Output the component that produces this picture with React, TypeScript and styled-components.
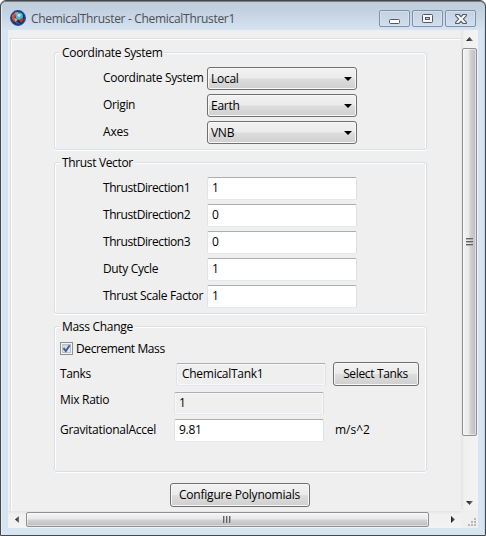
import React from "react";
import styled, { createGlobalStyle } from "styled-components";

const Global = createGlobalStyle`
  html, body { margin: 0; padding: 0; overflow: hidden; background: #fff; }
  *, *::before, *::after { box-sizing: border-box; }
  body { font: 12px/16px "Open Sans", "Noto Sans", sans-serif; color: #000; letter-spacing: -0.28px; }
`;

const Window = styled.div`
  width: 486px;
  height: 536px;
  padding: 0 7px 7px;
  border: 1px solid #47464a;
  border-radius: 6px 6px 0 0;
  background: linear-gradient(#c0cddb 0, #c3d1e0 10px, #d7e4f2 30px, #d7e4f2 100%);
  box-shadow: inset 0 1px 0 #77808a, inset 1px 0 0 #e6eef6, inset -1px 0 0 #c4d6e6;
`;

const TitleBar = styled.header`
  display: flex;
  height: 29px;
  padding: 9px 2px 0 2px;
`;

const Title = styled.h1`
  flex: 1;
  margin: 1px 0 0 5px;
  font-size: 12px;
  font-weight: 400;
  line-height: 16px;
  letter-spacing: -0.31px;
  color: #4b4f57;
  white-space: nowrap;
`;

const Caption = styled.button`
  display: flex;
  align-items: center;
  justify-content: center;
  width: 31px;
  height: 17px;
  margin-left: 2px;
  padding: 0;
  border: 1px solid #7f90ad;
  border-radius: 2px;
  background: linear-gradient(#c3d1e0, #d0deed);
  box-shadow: inset 0 0 0 1px #d5e1ee;
`;

const Client = styled.main`
  display: grid;
  grid-template-columns: 453px 17px;
  grid-template-rows: 481px 17px;
  width: 470px;
  height: 498px;
  background: #efefef;
`;

const Pane = styled.div`
  display: flex;
  flex-direction: column;
  margin: 8px 0 0 2px;
  padding: 13px 0 0 43px;
  border: solid #d5dfe5;
  border-width: 1px 0 0 1px;
  box-shadow: inset 1px 1px 0 #fff;
`;

const Group = styled.fieldset<{ $h: number; $gap: number }>`
  display: flex;
  flex: none;
  flex-direction: column;
  width: 373px;
  min-width: 0;
  height: ${p => p.$h}px;
  margin: 0 0 ${p => p.$gap}px;
  padding: 0;
  border: 1px solid #d5dfe5;
  border-radius: 3px;
  box-shadow: inset 1px 1px 0 #fff, inset -1px 0 0 #fff, 0 1px 0 #fff;
`;

const Legend = styled.div<{ $ls: number }>`
  align-self: flex-start;
  flex: none;
  height: 16px;
  margin: -8px 0 0 5px;
  padding: 0 2px;
  background: #efefef;
  letter-spacing: ${p => p.$ls}px;
  white-space: nowrap;
`;

const Row = styled.div<{ $indent: number; $h: number; $gap: number }>`
  display: flex;
  flex: none;
  align-items: flex-start;
  height: ${p => p.$h}px;
  margin-top: ${p => p.$gap}px;
  padding-left: ${p => p.$indent}px;
`;

const Label = styled.label<{ $w: number; $ls: number; $top?: number }>`
  flex: none;
  width: ${p => p.$w}px;
  padding-top: ${p => p.$top ?? 3}px;
  letter-spacing: ${p => p.$ls}px;
  white-space: nowrap;
`;

const Select = styled.div`
  display: flex;
  justify-content: space-between;
  width: 150px;
  height: 23px;
  padding: 3px 4px 0 3px;
  border: 1px solid #707070;
  border-radius: 3px;
  background: linear-gradient(#f2f2f2 0, #ebebeb 48%, #dddddd 52%, #cfcfcf 100%);
  box-shadow: inset 0 0 0 1px #f8f8f8;
  svg { margin-top: 6px; }
`;

const Field = styled.div<{ $disabled?: boolean; $pad?: number }>`
  flex: none;
  width: 150px;
  height: 23px;
  padding: 2px 0 0 ${p => p.$pad ?? 4}px;
  border: 1px solid;
  border-color: #abadb3 #dbdfe6 #e3e9ef #e2e3ea;
  border-radius: 2px;
  background: ${p => (p.$disabled ? "#efefef" : "#fff")};
  box-shadow: inset 0 0 0 1px ${p => (p.$disabled ? "#f8f8f8" : "#fff")};
  white-space: nowrap;
`;

const TankField = styled(Field)`
  margin-top: 1px;
`;

const Button = styled.button<{ $w: number; $ls: number }>`
  flex: none;
  width: ${p => p.$w}px;
  height: 24px;
  padding: 0 1px 1px 0;
  border: 1px solid #707070;
  border-radius: 3px;
  background: linear-gradient(#f2f2f2 0, #ebebeb 48%, #dddddd 52%, #cfcfcf 100%);
  box-shadow: inset 0 0 0 1px #f8f8f8;
  color: #000;
  font: inherit;
  letter-spacing: ${p => p.$ls}px;
  white-space: nowrap;
`;

const Check = styled.span`
  display: block;
  width: 13px;
  height: 13px;
  margin-right: 3px;
  border: 1px solid #8e8f8f;
  background: linear-gradient(135deg, #c5ccd5, #f4f5f6);
  box-shadow: inset 0 0 0 1px #f4f4f4, inset 0 0 0 2px #b9c0ca;
  svg { display: block; }
`;

const CheckLabel = styled(Label)`
  margin-top: -1px;
`;

const VBar = styled.div`
  display: flex;
  flex-direction: column;
  align-items: center;
  width: 17px;
  height: 480px;
  padding-right: 1px;
  background: linear-gradient(90deg, #e4e4e4, #f0f0f0 20%, #f3f3f3);
`;

const HBar = styled.div`
  display: flex;
  align-items: center;
  height: 17px;
  background: linear-gradient(#e4e4e4, #f0f0f0 20%, #f3f3f3);
`;

const ArrowCell = styled.div<{ $w: number; $h: number }>`
  display: flex;
  flex: none;
  align-items: center;
  justify-content: center;
  width: ${p => p.$w}px;
  height: ${p => p.$h}px;
`;

const Thumb = styled.div<{ $vertical?: boolean }>`
  display: flex;
  flex: none;
  align-items: center;
  justify-content: center;
  width: ${p => (p.$vertical ? 15 : 403)}px;
  height: ${p => (p.$vertical ? 388 : 15)}px;
  border: 1px solid #8f8f8f;
  border-radius: 2px;
  background: linear-gradient(${p => (p.$vertical ? "90deg" : "180deg")}, #f4f4f4 0, #e9e9eb 45%, #d3d3d6 55%, #bcbcc0 100%);
  box-shadow: inset 0 0 0 1px rgba(255, 255, 255, 0.5);
`;

const Spacer = styled.div`
  flex: 1;
`;

const Gap = styled.div<{ $w: number }>`
  flex: none;
  width: ${p => p.$w}px;
`;

const Grip = styled.div`
  display: flex;
  align-items: flex-end;
  justify-content: flex-end;
  padding: 0 2px 2px 0;
`;

const Logo = () => (
  <svg width="16" height="16" viewBox="0 0 16 16">
    <circle cx="8" cy="8" r="7.2" fill="#1b2747" stroke="#1d4a9c" strokeWidth="1.5" />
    <path d="M2 5 5.5 2l1.5 2-2.5 3 1.5 4-2 1L2 9z" fill="#d9512c" />
    <path d="M4.5 3l4-1.2L7 4.5z" fill="#f0b49a" />
    <circle cx="9.3" cy="6.3" r="3.7" fill="#45b8cf" />
    <path d="M7 5 9 3.5l2 1.5-2 2.5z" fill="#b2e9ea" />
    <path d="M9 10l4-2.5.7 2-2.7 3.5z" fill="#c8322d" />
    <path d="M3.5 11l4 .5 2.5 2.3-3 .5z" fill="#3553ab" />
    <path d="M4.5 7.5l3 2.5-2 2z" fill="#e1b4a0" />
  </svg>
);

const Down = () => (
  <svg width="8" height="4" viewBox="0 0 8 4"><path d="M0 0h8L4 4z" fill="#000" /></svg>
);

const Arrow = ({ d, w, h, id }: { d: string; w: number; h: number; id: string }) => (
  <svg width={w} height={h} viewBox={`0 0 ${w} ${h}`}>
    <defs>
      <linearGradient id={id}><stop stopColor="#151515" /><stop offset="1" stopColor="#777" /></linearGradient>
    </defs>
    <path d={d} fill={`url(#${id})`} />
  </svg>
);

const Ridges = ({ vertical }: { vertical?: boolean }) => (
  <svg width="9" height="9" viewBox="0 0 9 9">
    <g transform={vertical ? "matrix(0 1 1 0 0 0)" : undefined}>
      {[1, 4, 7].map(x => (
        <g key={x}>
          <path d={`M${x - 0.5} 1v7`} stroke="#626367" />
          <path d={`M${x + 0.5} 1v7`} stroke="#b0b0b3" />
        </g>
      ))}
    </g>
  </svg>
);

const coordinates: [string, string, number][] = [
  ["Coordinate System", "Local", -0.32],
  ["Origin", "Earth", -0.35],
  ["Axes", "VNB", -0.2],
];

const thrust: [string, string, number][] = [
  ["ThrustDirection1", "1", -0.43],
  ["ThrustDirection2", "0", -0.43],
  ["ThrustDirection3", "0", -0.43],
  ["Duty Cycle", "1", -0.35],
  ["Thrust Scale Factor", "1", -0.33],
];

export default function App() {
  return (
    <>
      <Global />
      <Window>
        <TitleBar>
          <Logo />
          <Title>ChemicalThruster - ChemicalThruster1</Title>
          <Caption aria-label="Minimize">
            <svg width="11" height="11"><rect x=".5" y="6.5" width="10" height="4" rx="1" fill="#fff" stroke="#535666" /></svg>
          </Caption>
          <Caption aria-label="Maximize">
            <svg width="11" height="9"><rect x=".5" y=".5" width="10" height="8" rx="1" fill="#f8f8f8" stroke="#535666" /><rect x="3.5" y="3.5" width="4" height="2" fill="#b6c8dc" stroke="#535666" /></svg>
          </Caption>
          <Caption aria-label="Close">
            <svg width="12" height="10" viewBox="0 0 12 10"><path d="M.7.5h3.2L6 2.6 8.1.5h3.2v1.3L8.4 5l2.9 3.2v1.3H8.1L6 7.4 3.9 9.5H.7V8.2L3.6 5 .7 1.8z" fill="#f8f8f8" stroke="#535666" strokeWidth="1.1" /></svg>
          </Caption>
        </TitleBar>
        <Client>
          <Pane>
            <Group $h={98} $gap={12}>
              <Legend $ls={-0.32}>Coordinate System</Legend>
              {coordinates.map(([name, value, spacing], i) => (
                <Row key={name} $indent={48} $h={23} $gap={i ? 4 : 6}>
                  <Label $w={104} $ls={spacing}>{name}</Label>
                  <Select>{value}<Down /></Select>
                </Row>
              ))}
            </Group>
            <Group $h={152} $gap={12}>
              <Legend $ls={-0.35}>Thrust Vector</Legend>
              {thrust.map(([name, value, spacing], i) => (
                <Row key={name} $indent={48} $h={23} $gap={i ? 4 : 6}>
                  <Label $w={104} $ls={spacing}>{name}</Label>
                  <Field>{value}</Field>
                </Row>
              ))}
            </Group>
            <Group $h={146} $gap={11}>
              <Legend $ls={-0.3}>Mass Change</Legend>
              <Row $indent={5} $h={16} $gap={7}>
                <Check><svg width="11" height="11"><path d="M2.5 5.2 4.8 8 8.7 2.2" fill="none" stroke="#4a5f97" strokeWidth="2" /></svg></Check>
                <CheckLabel $w={90} $ls={-0.4} $top={0}>Decrement Mass</CheckLabel>
              </Row>
              <Row $indent={5} $h={24} $gap={4}>
                <Label $w={116} $ls={-0.35} $top={4}>Tanks</Label>
                <TankField $disabled $pad={5}>ChemicalTank1</TankField>
                <Spacer />
                <Button $w={86} $ls={-0.35}>Select Tanks</Button>
                <Gap $w={7} />
              </Row>
              <Row $indent={5} $h={23} $gap={6}>
                <Label $w={114} $ls={-0.3} $top={0}>Mix Ratio</Label>
                <Field $disabled>1</Field>
              </Row>
              <Row $indent={5} $h={23} $gap={4}>
                <Label $w={114} $ls={-0.26}>GravitationalAccel</Label>
                <Field>9.81</Field>
                <Gap $w={11} />
                <Label $w={40} $ls={0}>m/s^2</Label>
              </Row>
            </Group>
            <Row $indent={116} $h={24} $gap={0}>
              <Button $w={140} $ls={-0.2}>Configure Polynomials</Button>
            </Row>
          </Pane>
          <VBar>
            <ArrowCell $w={16} $h={18}><Arrow id="up" w={7} h={4} d="M0 4h7L3.5 0z" /></ArrowCell>
            <Thumb $vertical><Ridges vertical /></Thumb>
            <Spacer />
            <ArrowCell $w={16} $h={15}><Arrow id="down" w={7} h={4} d="M0 0h7L3.5 4z" /></ArrowCell>
          </VBar>
          <HBar>
            <ArrowCell $w={18} $h={16}><Arrow id="left" w={4} h={7} d="M4 0v7L0 3.5z" /></ArrowCell>
            <Thumb><Ridges /></Thumb>
            <Spacer />
            <ArrowCell $w={16} $h={16}><Arrow id="right" w={4} h={7} d="M0 0v7l4-3.5z" /></ArrowCell>
          </HBar>
          <Grip>
            <svg width="8" height="8" fill="#b8b8b8"><path d="M6 0h2v2H6zM3 3h2v2H3zM6 3h2v2H6zM0 6h2v2H0zM3 6h2v2H3zM6 6h2v2H6z" /></svg>
          </Grip>
        </Client>
      </Window>
    </>
  );
}
